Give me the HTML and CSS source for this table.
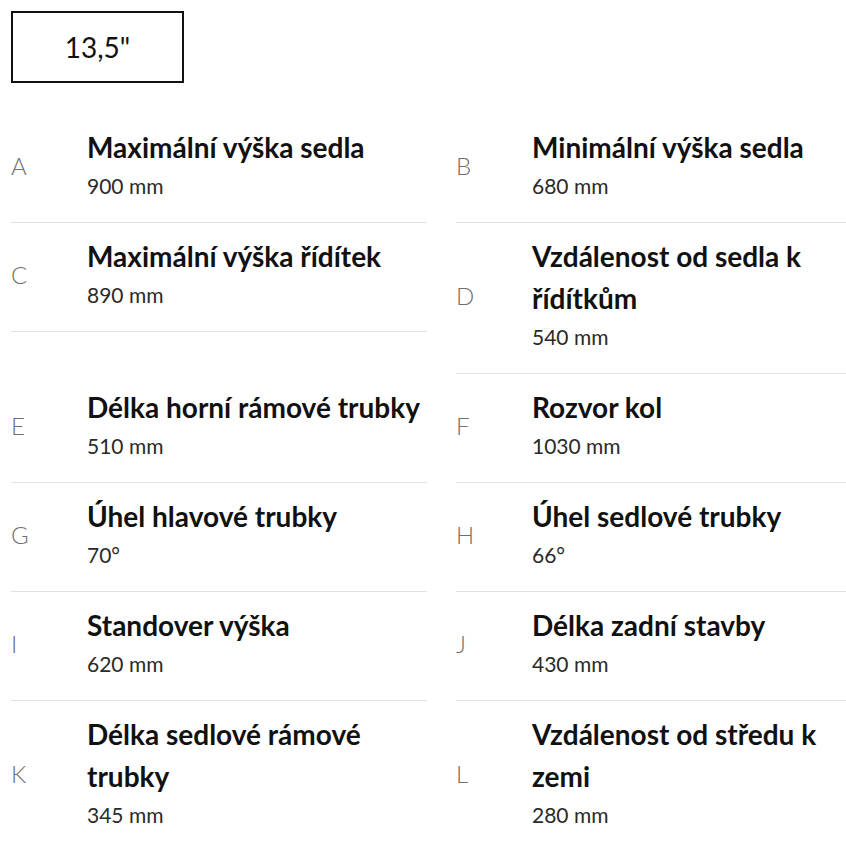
FILE: index.html
```html
<!DOCTYPE html>
<html lang="cs">
<head>
<meta charset="utf-8">
<title>Geometrie</title>
<link rel="stylesheet" href="styles.css">
</head>
<body>
<div class="page">
  <div class="size-box">13,5"</div>
  <div class="geo">
    <div class="cell"><div class="letter">A</div><div class="info"><div class="title">Maximální výška sedla</div><div class="value">900 mm</div></div></div>
    <div class="cell"><div class="letter">B</div><div class="info"><div class="title">Minimální výška sedla</div><div class="value">680 mm</div></div></div>
    <div class="cell"><div class="letter">C</div><div class="info"><div class="title">Maximální výška řídítek</div><div class="value">890 mm</div></div></div>
    <div class="cell"><div class="letter">D</div><div class="info"><div class="title">Vzdálenost od sedla k řídítkům</div><div class="value">540 mm</div></div></div>
    <div class="cell"><div class="letter">E</div><div class="info"><div class="title">Délka horní rámové trubky</div><div class="value">510 mm</div></div></div>
    <div class="cell"><div class="letter">F</div><div class="info"><div class="title">Rozvor kol</div><div class="value">1030 mm</div></div></div>
    <div class="cell"><div class="letter">G</div><div class="info"><div class="title">Úhel hlavové trubky</div><div class="value">70°</div></div></div>
    <div class="cell"><div class="letter">H</div><div class="info"><div class="title">Úhel sedlové trubky</div><div class="value">66°</div></div></div>
    <div class="cell"><div class="letter">I</div><div class="info"><div class="title">Standover výška</div><div class="value">620 mm</div></div></div>
    <div class="cell"><div class="letter">J</div><div class="info"><div class="title">Délka zadní stavby</div><div class="value">430 mm</div></div></div>
    <div class="cell"><div class="letter">K</div><div class="info"><div class="title">Délka sedlové rámové trubky</div><div class="value">345 mm</div></div></div>
    <div class="cell"><div class="letter">L</div><div class="info"><div class="title">Vzdálenost od středu k zemi</div><div class="value">280 mm</div></div></div>
  </div>
</div>
</body>
</html>
```
FILE: styles.css
```css
html, body {
  margin: 0;
  padding: 0;
  background: #fff;
}
body {
  font-family: Lato, "Noto Sans", sans-serif;
  color: #111;
  overflow: hidden;
}
.page {
  padding: 11px 0 0 11px;
}
.size-box {
  box-sizing: border-box;
  width: 173px;
  height: 72px;
  border: 2px solid #111;
  display: flex;
  align-items: center;
  justify-content: center;
  font-size: 28px;
  font-weight: 400;
  color: #111;
}
.geo {
  margin-top: 31px;
  display: grid;
  grid-template-columns: 416px 1fr;
  column-gap: 29px;
  align-items: start;
}
.cell {
  display: flex;
  align-items: center;
  padding: 12px 0 18px;
  border-bottom: 1px solid #e2e2e2;
}
.letter {
  width: 76px;
  flex: none;
  font-size: 24px;
  font-weight: 300;
  color: #6f6f6f;
}
.info {
  flex: 1;
  min-width: 0;
}
.title {
  font-size: 28px;
  font-weight: 700;
  line-height: 42px;
  color: #111;
}
.value {
  font-size: 21px;
  font-weight: 400;
  line-height: 36px;
  color: #2a2a2a;
}
```
